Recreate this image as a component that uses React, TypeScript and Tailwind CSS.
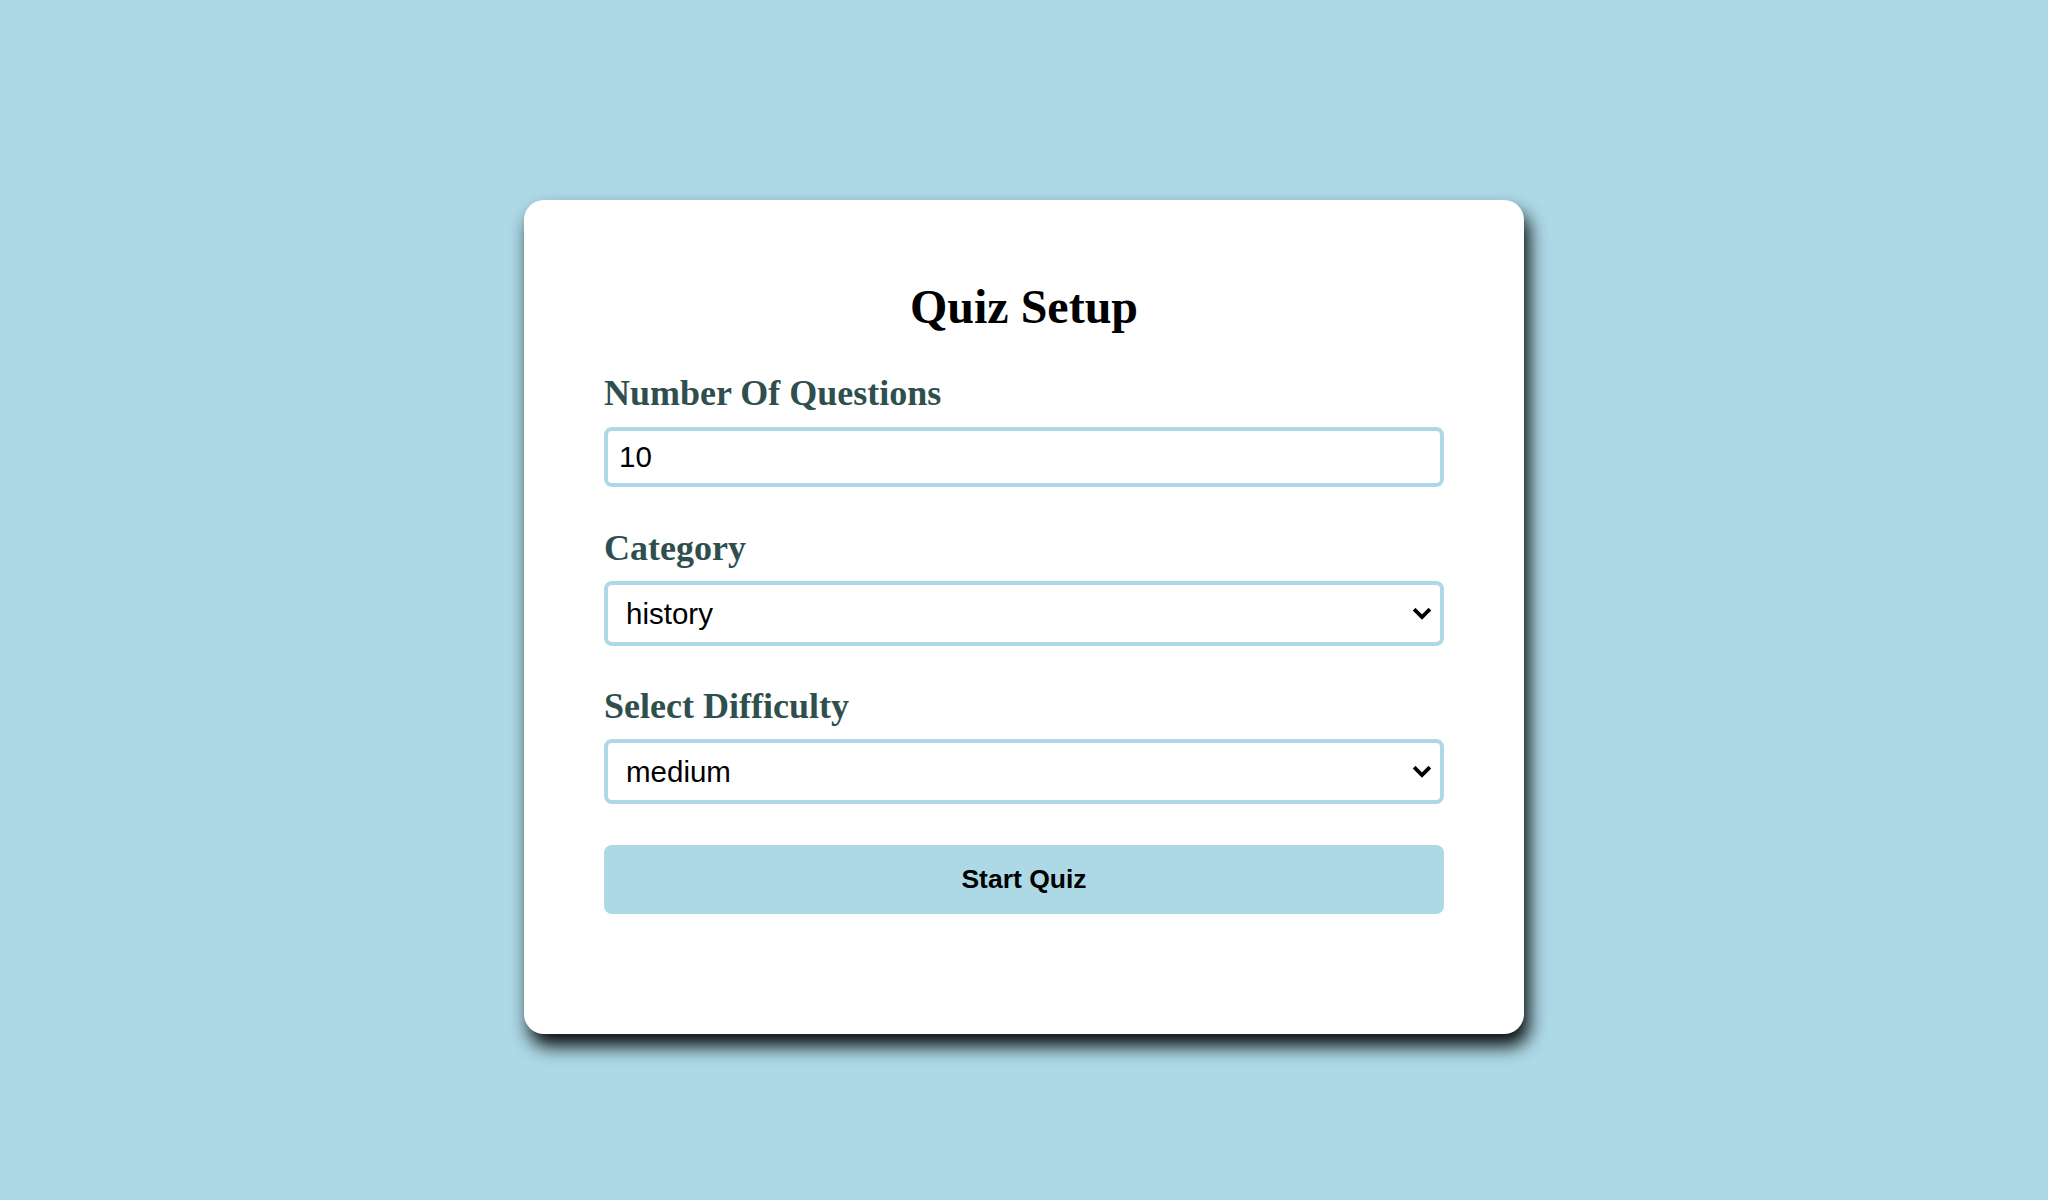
import { useState } from 'react'

function Chevron() {
  return (
    <svg
      width="18"
      height="12"
      viewBox="0 0 18 12"
      className="pointer-events-none absolute right-[13px] top-1/2 -translate-y-1/2"
    >
      <path d="M2.5 2.5 L9 9 L15.5 2.5" fill="none" stroke="#000" strokeWidth="3.8" strokeLinecap="square" />
    </svg>
  )
}

export default function App() {
  const [amount, setAmount] = useState('10')
  const [category, setCategory] = useState('history')
  const [difficulty, setDifficulty] = useState('medium')

  const labelClass =
    "block font-['Liberation_Serif',serif] text-[36px] leading-[40px] font-bold text-[#2f4f4f]"
  const fieldClass =
    "w-full border-4 border-[#add8e6] rounded-[8px] bg-white text-black font-['Liberation_Sans',Arial,sans-serif] text-[29.5px] outline-none"

  return (
    <div className="min-h-screen bg-[#add8e6] pt-[200px] font-['Liberation_Sans',Arial,sans-serif]">
      <div className="mx-auto w-[1000px] rounded-[20px] bg-white p-[80px] shadow-[5px_12px_18px_rgba(0,0,0,0.95)]">
        <h1 className="text-center font-['Liberation_Serif',serif] text-[48px] leading-[53px] font-bold text-black">
          Quiz Setup
        </h1>

        <div className="mt-[40px]">
          <label htmlFor="amount" className={labelClass}>
            Number Of Questions
          </label>
          <input
            id="amount"
            type="text"
            value={amount}
            onChange={(e) => setAmount(e.target.value)}
            className={`${fieldClass} mt-[14px] h-[60px] px-[11px]`}
          />
        </div>

        <div className="mt-[41px]">
          <label htmlFor="category" className={labelClass}>
            Category
          </label>
          <div className="relative mt-[13px]">
            <select
              id="category"
              value={category}
              onChange={(e) => setCategory(e.target.value)}
              className={`${fieldClass} h-[65px] appearance-none pl-[18px] pr-[40px] pt-[2px]`}
            >
              <option value="sports">sports</option>
              <option value="history">history</option>
              <option value="politics">politics</option>
            </select>
            <Chevron />
          </div>
        </div>

        <div className="mt-[40px]">
          <label htmlFor="difficulty" className={labelClass}>
            Select Difficulty
          </label>
          <div className="relative mt-[13px]">
            <select
              id="difficulty"
              value={difficulty}
              onChange={(e) => setDifficulty(e.target.value)}
              className={`${fieldClass} h-[65px] appearance-none pl-[18px] pr-[40px] pt-[2px]`}
            >
              <option value="easy">easy</option>
              <option value="medium">medium</option>
              <option value="hard">hard</option>
            </select>
            <Chevron />
          </div>
        </div>

        <button
          type="button"
          className="mt-[41px] mb-[40px] block h-[69px] w-full rounded-[8px] bg-[#add8e6] text-[26.5px] font-bold text-black"
        >
          Start Quiz
        </button>
      </div>
    </div>
  )
}
